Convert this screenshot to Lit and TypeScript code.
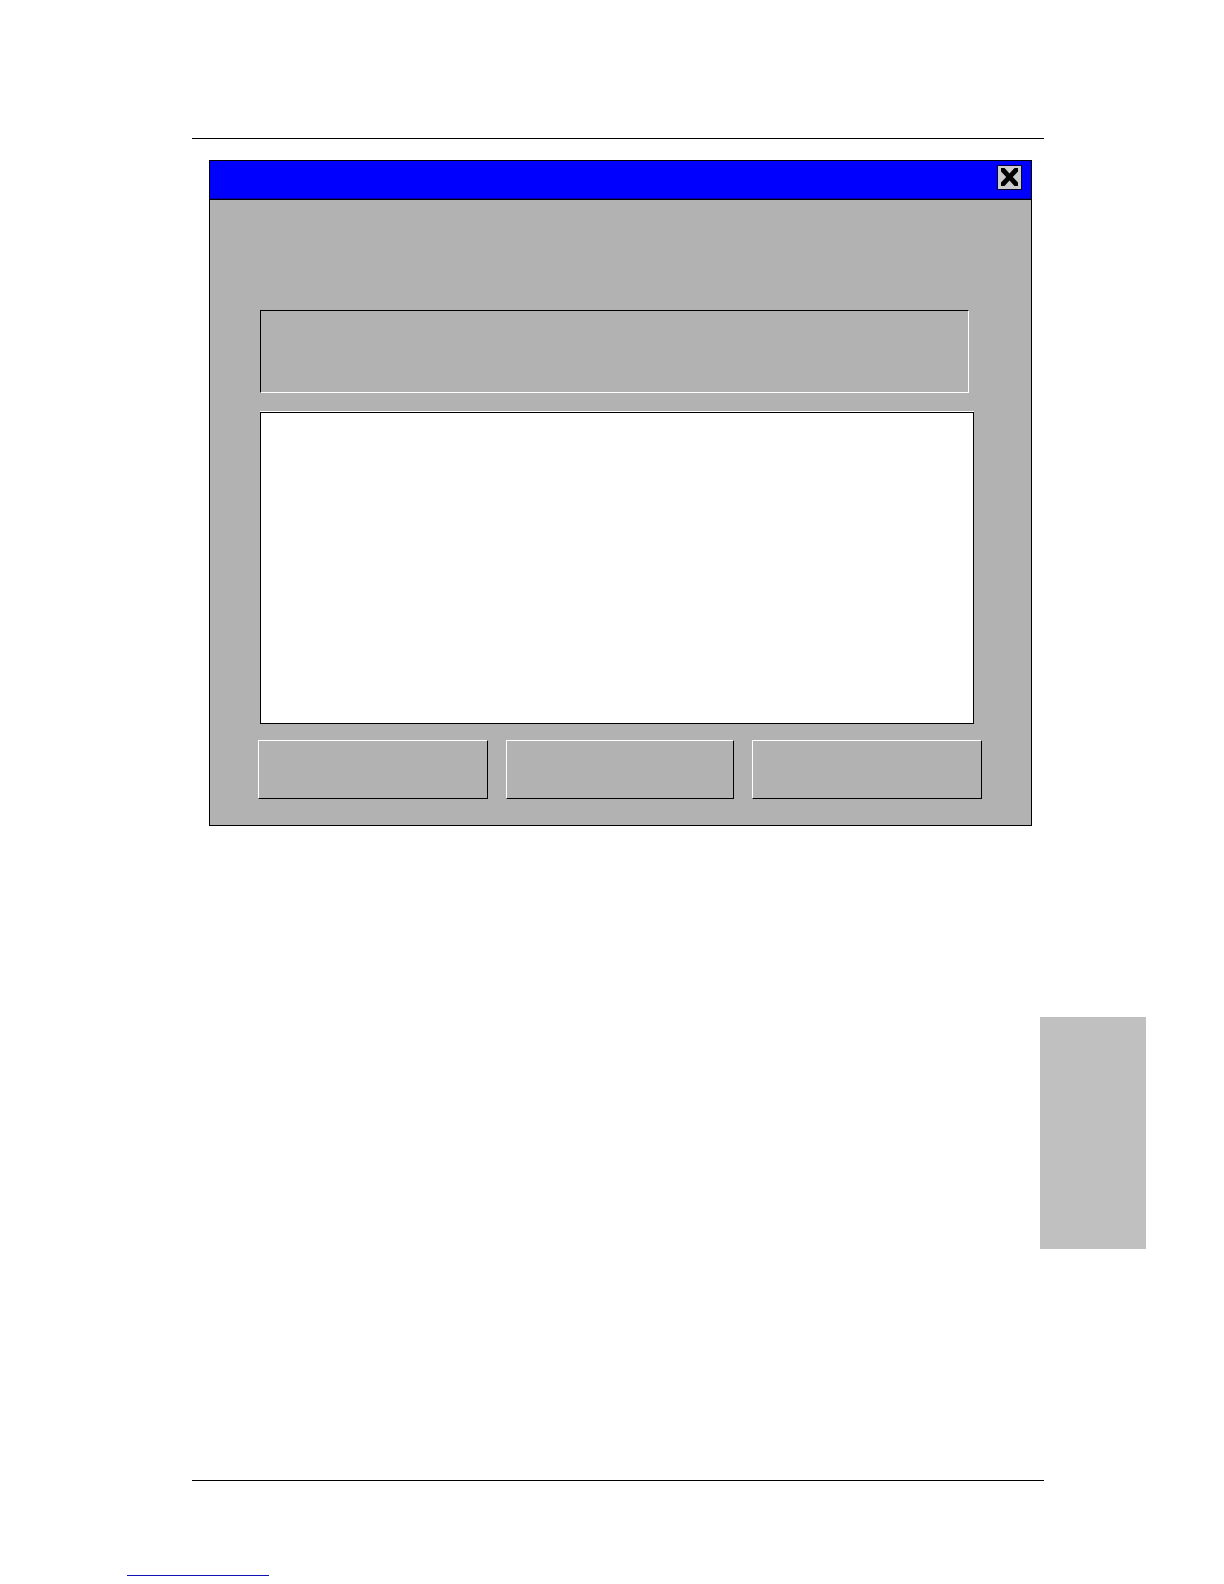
import { LitElement, html, css } from "lit";
import { customElement } from "lit/decorators.js";

@customElement("dialog-window")
export class DialogWindow extends LitElement {
  static styles = css`
    :host {
      display: block;
      border: 1px solid #000;
      background: #b2b2b2;
      font-family: "Liberation Sans", Arial, sans-serif;
      font-size: 16px;
    }
    .title-bar {
      display: flex;
      justify-content: flex-end;
      align-items: flex-start;
      box-sizing: border-box;
      min-height: 39px;
      padding: 4px 9px 0;
      background: #0000ff;
      border-bottom: 1px solid #000;
      box-shadow: inset 0 -1px #0000b0;
    }
    .close {
      display: block;
      box-sizing: border-box;
      width: 25px;
      height: 25px;
      padding: 0;
      border: 1px solid #000033;
      border-radius: 0;
      background: #cccccc;
    }
    .close svg {
      display: block;
    }
    .body {
      display: flex;
      flex-direction: column;
      padding: 110px 49px 26px 48px;
    }
    .panel {
      box-sizing: border-box;
      min-height: 83px;
      margin: 0 13px 0 2px;
      border: 1px solid;
      border-color: #000 #fff #fff #000;
    }
    .field {
      display: flex;
      margin: 18px 8px 0 2px;
      border-top: 1px solid #fff;
    }
    .text {
      flex: 1;
      min-width: 0;
      box-sizing: border-box;
      height: 312px;
      margin: 0;
      padding: 8px;
      border: 1px solid #000;
      border-radius: 0;
      background: #fff;
      resize: none;
      font: inherit;
    }
    .actions {
      display: grid;
      grid-template-columns: 230fr 228fr 230fr;
      gap: 18px;
      margin-top: 16px;
    }
    .action {
      box-sizing: border-box;
      min-height: 59px;
      padding: 0;
      border: 1px solid;
      border-color: #fff #000 #000 #fff;
      border-radius: 0;
      background: #b2b2b2;
      font: inherit;
    }
  `;

  render() {
    return html`
      <header class="title-bar">
        <button class="close" type="button" aria-label="Close">
          <svg width="23" height="23" viewBox="0 0 23 23" aria-hidden="true">
            <path
              d="M3 2H6.5L11.5 7.5L16.5 2H20V5.5L14.8 11L20 16.5V20H16.5L11.5 14.5L6.5 20H3V16.5L8.2 11L3 5.5Z"
              fill="#000"
            />
          </svg>
        </button>
      </header>
      <div class="body">
        <section class="panel"></section>
        <div class="field">
          <textarea class="text" aria-label="Details"></textarea>
        </div>
        <div class="actions">
          ${["First action", "Second action", "Third action"].map(
            (name) => html`<button class="action" type="button" aria-label=${name}></button>`
          )}
        </div>
      </div>
    `;
  }
}

@customElement("app-root")
export class AppRoot extends LitElement {
  static styles = css`
    :host {
      display: block;
      background: #fff;
    }
    .page {
      display: flex;
      flex-direction: column;
      padding: 138px 78px 8px 127px;
    }
    .rule {
      height: 1px;
      margin: 0 102px 0 65px;
      border: 0;
      background: #000;
    }
    .window {
      margin: 21px 114px 0 82px;
    }
    .tab {
      align-self: flex-end;
      width: 106px;
      height: 232px;
      margin: 191px 0 231px;
      background: #c0c0c0;
    }
    .link {
      align-self: flex-start;
      width: 142px;
      margin-top: 94px;
      border-bottom: 1px solid #1010b4;
    }
  `;

  render() {
    return html`
      <main class="page">
        <hr class="rule" />
        <dialog-window class="window"></dialog-window>
        <aside class="tab"></aside>
        <hr class="rule" />
        <a class="link" href="#" aria-label="Home"></a>
      </main>
    `;
  }
}
